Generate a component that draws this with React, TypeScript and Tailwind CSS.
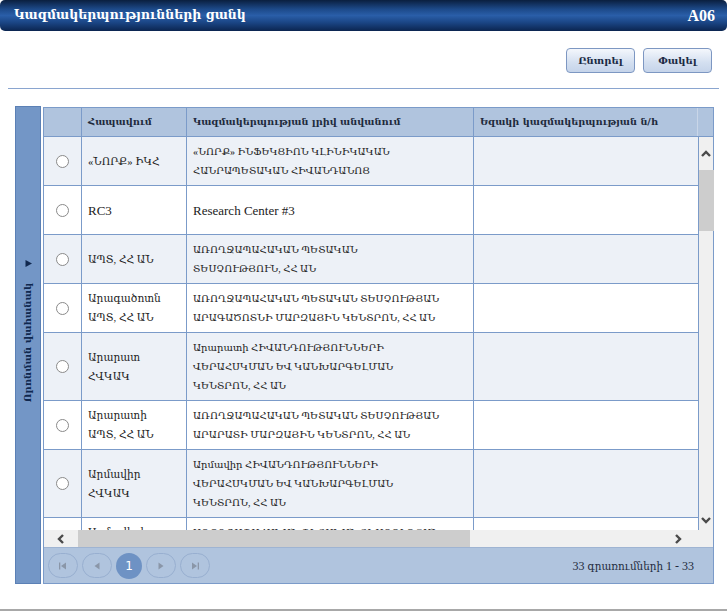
import React from "react";

type Row = { code: string[]; name: string[]; latin?: boolean };

const rows: Row[] = [
  { code: ["«ՆՈՐՔ» ԻԿՀ"], name: ["«ՆՈՐՔ» ԻՆՖԵԿՑԻՈՆ ԿԼԻՆԻԿԱԿԱՆ", "ՀԱՆՐԱՊԵՏԱԿԱՆ ՀԻՎԱՆԴԱՆՈՑ"] },
  { code: ["RC3"], name: ["Research Center #3"], latin: true },
  { code: ["ԱՊՏ, ՀՀ ԱՆ"], name: ["ԱՌՈՂՋԱՊԱՀԱԿԱՆ ՊԵՏԱԿԱՆ", "ՏԵՍՉՈՒԹՅՈՒՆ, ՀՀ ԱՆ"] },
  { code: ["Արագածոտն", "ԱՊՏ, ՀՀ ԱՆ"], name: ["ԱՌՈՂՋԱՊԱՀԱԿԱՆ ՊԵՏԱԿԱՆ ՏԵՍՉՈՒԹՅԱՆ", "ԱՐԱԳԱԾՈՏՆԻ ՄԱՐԶԱՅԻՆ ԿԵՆՏՐՈՆ, ՀՀ ԱՆ"] },
  { code: ["Արարատ", "ՀՎԿԱԿ"], name: ["Արարատի ՀԻՎԱՆԴՈՒԹՅՈՒՆՆԵՐԻ", "ՎԵՐԱՀՍԿՄԱՆ ԵՎ ԿԱՆԽԱՐԳԵԼՄԱՆ", "ԿԵՆՏՐՈՆ, ՀՀ ԱՆ"] },
  { code: ["Արարատի", "ԱՊՏ, ՀՀ ԱՆ"], name: ["ԱՌՈՂՋԱՊԱՀԱԿԱՆ ՊԵՏԱԿԱՆ ՏԵՍՉՈՒԹՅԱՆ", "ԱՐԱՐԱՏԻ ՄԱՐԶԱՅԻՆ ԿԵՆՏՐՈՆ, ՀՀ ԱՆ"] },
  { code: ["Արմավիր", "ՀՎԿԱԿ"], name: ["Արմավիր ՀԻՎԱՆԴՈՒԹՅՈՒՆՆԵՐԻ", "ՎԵՐԱՀՍԿՄԱՆ ԵՎ ԿԱՆԽԱՐԳԵԼՄԱՆ", "ԿԵՆՏՐՈՆ, ՀՀ ԱՆ"] },
  { code: ["Արմավիրի", "ԱՊՏ, ՀՀ ԱՆ"], name: ["ԱՌՈՂՋԱՊԱՀԱԿԱՆ ՊԵՏԱԿԱՆ ՏԵՍՉՈՒԹՅԱՆ", "ԱՐՄԱՎԻՐԻ ՄԱՐԶԱՅԻՆ ԿԵՆՏՐՈՆ, ՀՀ ԱՆ"] },
];

function Chevron({ dir }: { dir: "up" | "down" | "left" | "right" }) {
  const pts: Record<string, string> = {
    up: "2,8 6,4 10,8",
    down: "2,4 6,8 10,4",
    left: "8,2 4,6 8,10",
    right: "4,2 8,6 4,10",
  };
  return (
    <svg width="12" height="12" viewBox="0 0 12 12">
      <polyline points={pts[dir]} fill="none" stroke="#4a4a4a" strokeWidth="2.4" />
    </svg>
  );
}

function PagerIcon({ kind }: { kind: "first" | "prev" | "next" | "last" }) {
  return (
    <svg width="10" height="10" viewBox="0 0 10 10">
      {kind === "first" && (
        <>
          <rect x="1" y="1.5" width="1.3" height="7" fill="#8a96a8" />
          <polygon points="8,1.5 3,5 8,8.5" fill="#8a96a8" />
        </>
      )}
      {kind === "prev" && <polygon points="7.5,1.5 2.5,5 7.5,8.5" fill="#8a96a8" />}
      {kind === "next" && <polygon points="2.5,1.5 7.5,5 2.5,8.5" fill="#8a96a8" />}
      {kind === "last" && (
        <>
          <polygon points="2,1.5 7,5 2,8.5" fill="#8a96a8" />
          <rect x="7.7" y="1.5" width="1.3" height="7" fill="#8a96a8" />
        </>
      )}
    </svg>
  );
}

export default function App() {
  return (
    <div className="w-[727px] h-[612px] bg-white relative overflow-hidden font-['Liberation_Serif','DejaVu_Serif',serif] text-[#222]">
      {/* Title bar */}
      <div className="h-[31px] rounded-[5px] bg-[linear-gradient(to_bottom,#0a1f3f_0%,#1d4a8a_30%,#2a5ea8_50%,#1b4686_72%,#0b2550_100%)] flex items-center justify-between pl-[14px] pr-[12px]">
        <span className="text-white font-bold text-[12.5px] font-['DejaVu_Serif',serif]">Կազմակերպությունների ցանկ</span>
        <span className="text-white font-bold text-[16px] font-['Liberation_Serif',serif]">A06</span>
      </div>

      {/* Buttons */}
      <div className="flex justify-end gap-[8px] pr-[15px] mt-[17px]">
        {["Ընտրել", "Փակել"].map((t) => (
          <div
            key={t}
            className="w-[69px] h-[25px] rounded-[4px] border border-[#7d97c2] bg-[linear-gradient(to_bottom,#f4f7fc,#d3dff0_60%,#c5d4ea)] flex items-center justify-center text-[10px] font-bold text-[#1b2a44] font-['DejaVu_Serif',serif]"
          >
            {t}
          </div>
        ))}
      </div>

      {/* Divider */}
      <div className="mx-[8px] mt-[15px] h-px bg-[#8aa5cf]" />

      {/* Main */}
      <div className="flex pl-[15px] mt-[17px] gap-[2px]">
        {/* Left collapsed panel */}
        <div className="w-[26px] h-[478px] bg-[#7396c6] border border-[#5b80b5] flex flex-col items-center pt-[152px]">
          <svg width="9" height="9" viewBox="0 0 9 9">
            <polygon points="1.5,1 8,4.5 1.5,8" fill="#10284f" />
          </svg>
          <div className="mt-[14px] h-[120px] w-[20px] flex items-center justify-center">
            <span className="-rotate-90 whitespace-nowrap text-[10px] font-bold text-[#10284f] font-['DejaVu_Serif',serif]">
              Որոնման վահանակ
            </span>
          </div>
        </div>

        {/* Grid */}
        <div className="w-[671px] h-[477px] border border-[#7b9bc9] flex flex-col mt-[1px]">
          {/* header */}
          <div className="h-[29px] flex bg-[#b0c4de] border-b border-[#7b9bc9] text-[9.7px] font-bold text-[#1e2a3c] font-['DejaVu_Serif',serif]">
            <div className="w-[38px] border-r border-[#7b9bc9]" />
            <div className="w-[105px] border-r border-[#7b9bc9] flex items-center pl-[6px]">Հապավում</div>
            <div className="w-[287px] border-r border-[#7b9bc9] flex items-center pl-[6px]">Կազմակերպության լրիվ անվանում</div>
            <div className="w-[224px] border-r border-[#c9d6e8] flex items-center pl-[6px]">Եզակի կազմակերպության ն/հ</div>
            <div className="flex-1" />
          </div>

          {/* body */}
          <div className="flex h-[393px]">
            <div className="w-[654px] overflow-hidden">
              {rows.map((r, i) => (
                <div
                  key={i}
                  className={`flex border-b border-[#7b9bc9] leading-[19px] ${i % 2 === 0 ? "bg-[#edf1f7]" : "bg-white"}`}
                >
                  <div className="w-[38px] shrink-0 border-r border-[#7b9bc9] flex items-center justify-center min-h-[48px]">
                    <div className="w-[13px] h-[13px] rounded-full border border-[#8a8a8a] bg-white" />
                  </div>
                  <div className={`w-[105px] shrink-0 border-r border-[#7b9bc9] flex flex-col justify-center pl-[6px] py-[5px] ${r.latin ? "text-[13px]" : "text-[10.6px]"}`}>
                    {r.code.map((c, j) => (
                      <div key={j} className="whitespace-nowrap">{c}</div>
                    ))}
                  </div>
                  <div className={`w-[287px] shrink-0 border-r border-[#7b9bc9] flex flex-col justify-center pl-[6px] py-[5px] ${r.latin ? "text-[13px]" : "text-[10px]"}`}>
                    {r.name.map((c, j) => (
                      <div key={j} className="whitespace-nowrap">{c}</div>
                    ))}
                  </div>
                  <div className="w-[224px] shrink-0" />
                </div>
              ))}
            </div>
            {/* vertical scrollbar */}
            <div className="w-[15px] bg-[#f0f0f0] flex flex-col items-center border-l border-[#7b9bc9]">
              <div className="h-[33px] flex items-center justify-center"><Chevron dir="up" /></div>
              <div className="w-[15px] h-[61px] bg-[#cdcdcd]" />
              <div className="flex-1" />
              <div className="h-[20px] flex items-center justify-center"><Chevron dir="down" /></div>
            </div>
          </div>

          {/* horizontal scrollbar */}
          <div className="h-[17px] flex bg-[#f0f0f0] items-center">
            <div className="w-[34px] flex justify-center"><Chevron dir="left" /></div>
            <div className="w-[392px] h-[17px] bg-[#cdcdcd]" />
            <div className="flex-1" />
            <div className="w-[30px] flex justify-start pl-[2px]"><Chevron dir="right" /></div>
            <div className="w-[13px]" />
          </div>

          {/* pager */}
          <div className="flex-1 bg-[#b0c4de] border-t border-[#9fb4d2] flex items-center px-[4px]">
            <div className="flex items-center gap-[4px]">
              {(["first", "prev"] as const).map((k) => (
                <div key={k} className="w-[30px] h-[25px] rounded-full border border-[#98afd0] flex items-center justify-center">
                  <PagerIcon kind={k} />
                </div>
              ))}
              <div className="w-[26px] h-[26px] rounded-full bg-[#6e92c4] flex items-center justify-center text-white text-[12px] font-['DejaVu_Sans',sans-serif]">
                1
              </div>
              {(["next", "last"] as const).map((k) => (
                <div key={k} className="w-[30px] h-[25px] rounded-full border border-[#98afd0] flex items-center justify-center">
                  <PagerIcon kind={k} />
                </div>
              ))}
            </div>
            <div className="ml-auto pr-[15px] text-[12px] text-[#1e2a3c]">
              33 <span className="text-[10.4px]">գրառումների</span> 1 - 33
            </div>
          </div>
        </div>
      </div>

      {/* bottom window border */}
      <div className="absolute left-0 right-0 top-[609px] h-[2px] bg-[#a8a8a8]" />
    </div>
  );
}
